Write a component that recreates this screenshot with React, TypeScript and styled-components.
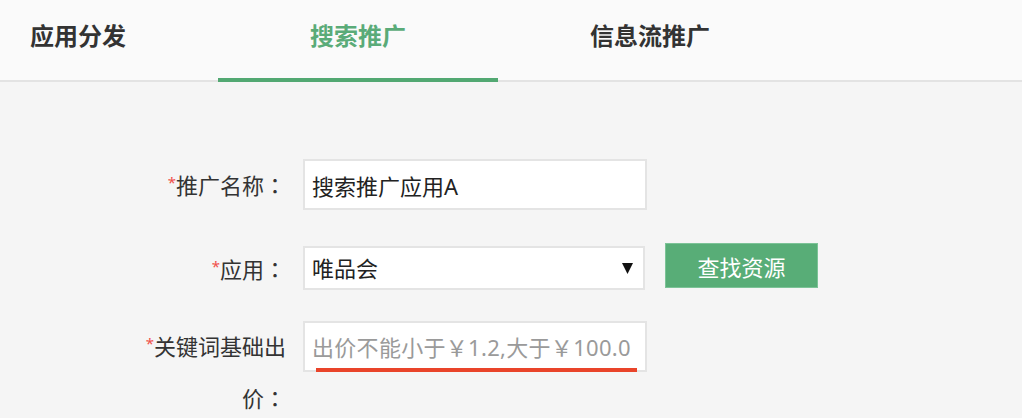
import React from 'react';
import styled, { createGlobalStyle } from 'styled-components';

const GlobalStyle = createGlobalStyle`
  * { box-sizing: border-box; }
  body {
    margin: 0;
    background: #f5f5f5;
    font-family: 'Noto Sans', 'Noto Sans CJK SC', sans-serif;
    color: #333;
  }
`;

const tabs = ['应用分发', '搜索推广', '信息流推广'];

export default function App() {
  return (
    <>
      <GlobalStyle />
      <Header>
        {tabs.map((t, i) => (
          <Tab key={t} $active={i === 1} $first={i === 0}>
            {t}
          </Tab>
        ))}
      </Header>
      <Form>
        <Row $mb={32}>
          <Label>
            <Star>*</Star>推广名称<Colon>：</Colon>
          </Label>
          <Input defaultValue='搜索推广应用A' />
        </Row>
        <Row $mb={26}>
          <Label>
            <Star>*</Star>应用<Colon>：</Colon>
          </Label>
          <SelectBox>
            <Select defaultValue='vip'>
              <option value='vip'>唯品会</option>
            </Select>
            <Arrow viewBox='0 0 11 11'>
              <polygon points='0,0 11,0 5.5,11' fill='#111' />
            </Arrow>
          </SelectBox>
          <Button>查找资源</Button>
        </Row>
        <Row $mb={0}>
          <Label>
            <Star>*</Star>关键词基础出价<Colon>：</Colon>
          </Label>
          <PriceField>
            <Input placeholder='出价不能小于￥1.2,大于￥100.0' />
            <Underline />
          </PriceField>
        </Row>
      </Form>
    </>
  );
}

const Header = styled.div`
  display: flex;
  height: 82px;
  background: #fafafa;
  border-bottom: 2px solid #e3e3e3;
`;

const Tab = styled.div<{ $active?: boolean; $first?: boolean }>`
  height: 82px;
  margin-bottom: -2px;
  padding: 0 92px 0 ${(p) => (p.$first ? '30px' : '92px')};
  line-height: 71px;
  font-size: 24px;
  font-weight: 700;
  color: ${(p) => (p.$active ? '#5aab78' : '#333')};
  border-bottom: 4px solid ${(p) => (p.$active ? '#52a872' : 'transparent')};
  cursor: pointer;
`;

const Form = styled.div`
  padding-top: 77px;
`;

const Row = styled.div<{ $mb: number }>`
  display: flex;
  align-items: flex-start;
  margin-bottom: ${(p) => p.$mb}px;
`;

const Label = styled.div`
  width: 286px;
  padding-left: 136px;
  text-align: right;
  font-size: 22px;
  line-height: 51px;
  color: #333;
  margin-right: 17px;
`;

const Star = styled.span`
  position: relative;
  top: -6px;
  color: #f0504a;
  font-size: 15px;
  line-height: 1;
`;

const Colon = styled.span`
  font-family: 'Noto Sans CJK TC', sans-serif;
`;

const Input = styled.input`
  display: block;
  width: 344px;
  height: 51px;
  padding: 0 4px 0 7px;
  border: 2px solid #e4e4e4;
  background: #fff;
  font-family: inherit;
  font-size: 22px;
  color: #222;
  outline: none;

  &::placeholder {
    color: #9a9a9a;
    letter-spacing: 0.3px;
  }
`;

const SelectBox = styled.div`
  position: relative;
  margin-top: 3px;
`;

const Select = styled.select`
  display: block;
  appearance: none;
  width: 342px;
  height: 44px;
  padding: 0 7px;
  border: 2px solid #e4e4e4;
  border-radius: 0;
  background: #fff;
  font-family: inherit;
  font-size: 22px;
  color: #222;
  outline: none;
`;

const Arrow = styled.svg`
  position: absolute;
  right: 12px;
  top: 17px;
  width: 11px;
  height: 11px;
  pointer-events: none;
`;

const Button = styled.button`
  margin-left: 20px;
  width: 153px;
  height: 45px;
  border: 1px solid #7cc397;
  background: #58ad77;
  color: #fff;
  font-family: inherit;
  font-size: 22px;
  cursor: pointer;
`;

const PriceField = styled.div`
  position: relative;
`;

const Underline = styled.div`
  position: absolute;
  left: 13px;
  top: 47px;
  width: 321px;
  height: 4px;
  background: #e9442a;
`;
